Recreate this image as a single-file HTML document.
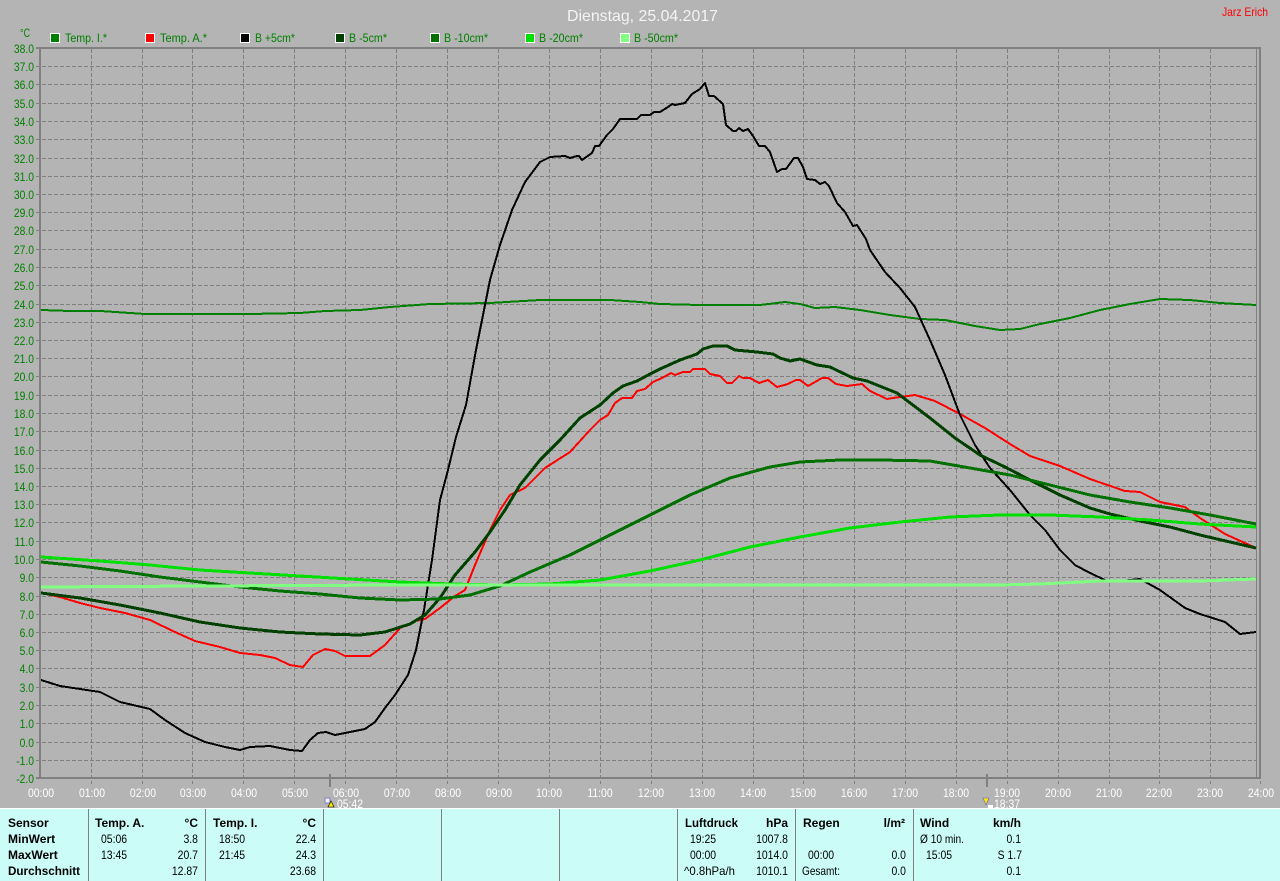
<!DOCTYPE html>
<html><head><meta charset="utf-8"><title>Dienstag, 25.04.2017</title>
<style>
html,body{margin:0;padding:0;background:#b4b4b4;width:1280px;height:881px;overflow:hidden}
svg{display:block}
text{font-family:"Liberation Sans",sans-serif;font-size:12px}
.y text{fill:#008000;text-anchor:end;transform-box:fill-box;transform-origin:100% 50%;transform:scaleX(.86)}
.x text{fill:#fff;text-anchor:middle;transform-box:fill-box;transform-origin:50% 50%;transform:scaleX(.87)}
.l text{fill:#008000}
.l rect{stroke:#fff;stroke-width:1}
.t text{fill:#000}
.t .b{font-weight:bold}
.t .r{text-anchor:end}
.t .s{transform-box:fill-box;transform-origin:0 50%;transform:scaleX(.87)}
.t .r.s{transform-origin:100% 50%}
polyline{fill:none;stroke-linejoin:round}
</style></head><body>
<svg width="1280" height="881" viewBox="0 0 1280 881" xmlns="http://www.w3.org/2000/svg">
<rect width="1280" height="881" fill="#b4b4b4"/>
<text x="567" y="21" fill="#f4f4f4" style="font-size:16px" textLength="151" lengthAdjust="spacingAndGlyphs">Dienstag, 25.04.2017</text>
<text x="1222" y="16" fill="#ff0000" textLength="46" lengthAdjust="spacingAndGlyphs">Jarz Erich</text>
<text x="20" y="37" fill="#008000" textLength="10" lengthAdjust="spacingAndGlyphs">°C</text>

<g class="l">
<rect x="50.500" y="33.500" width="9" height="9" fill="#008000"/><text x="65" y="42" textLength="42" lengthAdjust="spacingAndGlyphs">Temp. I.*</text>
<rect x="145.500" y="33.500" width="9" height="9" fill="#ff0000"/><text x="160" y="42" textLength="47" lengthAdjust="spacingAndGlyphs">Temp. A.*</text>
<rect x="240.500" y="33.500" width="9" height="9" fill="#000"/><text x="255" y="42" textLength="40" lengthAdjust="spacingAndGlyphs">B +5cm*</text>
<rect x="335.500" y="33.500" width="9" height="9" fill="#004000"/><text x="349" y="42" textLength="38" lengthAdjust="spacingAndGlyphs">B -5cm*</text>
<rect x="430.500" y="33.500" width="9" height="9" fill="#007000"/><text x="444" y="42" textLength="44" lengthAdjust="spacingAndGlyphs">B -10cm*</text>
<rect x="525.500" y="33.500" width="9" height="9" fill="#00e000"/><text x="539" y="42" textLength="44" lengthAdjust="spacingAndGlyphs">B -20cm*</text>
<rect x="620.500" y="33.500" width="9" height="9" fill="#80ff80"/><text x="634" y="42" textLength="44" lengthAdjust="spacingAndGlyphs">B -50cm*</text>
</g>

<g stroke="#808080" stroke-width="1" stroke-dasharray="4 2" shape-rendering="crispEdges" fill="none">
<path d="M36 66.500H1256M36 84.500H1256M36 103.500H1256M36 121.500H1256M36 139.500H1256M36 158.500H1256M36 176.500H1256M36 194.500H1256M36 212.500H1256M36 230.500H1256M36 249.500H1256M36 267.500H1256M36 285.500H1256M36 304.500H1256M36 322.500H1256M36 340.500H1256M36 358.500H1256M36 376.500H1256M36 395.500H1256M36 413.500H1256M36 431.500H1256M36 450.500H1256M36 468.500H1256M36 486.500H1256M36 504.500H1256M36 522.500H1256M36 541.500H1256M36 559.500H1256M36 577.500H1256M36 596.500H1256M36 614.500H1256M36 632.500H1256M36 650.500H1256M36 668.500H1256M36 687.500H1256M36 705.500H1256M36 723.500H1256M36 742.500H1256M36 760.500H1256"/>
<path d="M91.500 49V784M142.500 49V784M192.500 49V784M243.500 49V784M294.500 49V784M345.500 49V784M396.500 49V784M447.500 49V784M498.500 49V784M549.500 49V784M600.500 49V784M651.500 49V784M702.500 49V784M753.500 49V784M803.500 49V784M854.500 49V784M905.500 49V784M956.500 49V784M1007.500 49V784M1058.500 49V784M1109.500 49V784M1159.500 49V784M1210.500 49V784M1260.500 49V784"/>
</g>
<g stroke="#808080" shape-rendering="crispEdges" fill="none">
<path d="M36 48H1261M36 778H1261M40 47V779M1260 47V779" stroke-width="2"/>
<path d="M1256.500 48V778" stroke-width="1"/>
<path d="M330 774V787M987 774V787" stroke-width="2"/>
</g>

<g class="y">
<text x="34" y="53">38.0</text><text x="34" y="71">37.0</text><text x="34" y="89">36.0</text><text x="34" y="108">35.0</text><text x="34" y="126">34.0</text><text x="34" y="144">33.0</text><text x="34" y="163">32.0</text><text x="34" y="181">31.0</text><text x="34" y="199">30.0</text><text x="34" y="217">29.0</text><text x="34" y="235">28.0</text><text x="34" y="254">27.0</text><text x="34" y="272">26.0</text><text x="34" y="290">25.0</text><text x="34" y="309">24.0</text><text x="34" y="327">23.0</text><text x="34" y="345">22.0</text><text x="34" y="363">21.0</text><text x="34" y="381">20.0</text><text x="34" y="400">19.0</text><text x="34" y="418">18.0</text><text x="34" y="436">17.0</text><text x="34" y="455">16.0</text><text x="34" y="473">15.0</text><text x="34" y="491">14.0</text><text x="34" y="509">13.0</text><text x="34" y="527">12.0</text><text x="34" y="546">11.0</text><text x="34" y="564">10.0</text><text x="34" y="582">9.0</text><text x="34" y="601">8.0</text><text x="34" y="619">7.0</text><text x="34" y="637">6.0</text><text x="34" y="655">5.0</text><text x="34" y="673">4.0</text><text x="34" y="692">3.0</text><text x="34" y="710">2.0</text><text x="34" y="728">1.0</text><text x="34" y="747">0.0</text><text x="34" y="765">-1.0</text><text x="34" y="783">-2.0</text>
</g>

<g class="x">
<text x="41" y="797">00:00</text><text x="92" y="797">01:00</text><text x="143" y="797">02:00</text><text x="193" y="797">03:00</text><text x="244" y="797">04:00</text><text x="295" y="797">05:00</text><text x="346" y="797">06:00</text><text x="397" y="797">07:00</text><text x="448" y="797">08:00</text><text x="499" y="797">09:00</text><text x="549" y="797">10:00</text><text x="600" y="797">11:00</text><text x="651" y="797">12:00</text><text x="702" y="797">13:00</text><text x="753" y="797">14:00</text><text x="803" y="797">15:00</text><text x="854" y="797">16:00</text><text x="905" y="797">17:00</text><text x="956" y="797">18:00</text><text x="1007" y="797">19:00</text><text x="1058" y="797">20:00</text><text x="1109" y="797">21:00</text><text x="1159" y="797">22:00</text><text x="1210" y="797">23:00</text><text x="1261" y="797">24:00</text>
<text x="350" y="808">05:42</text><text x="1007" y="808">18:37</text>
</g>

<g shape-rendering="crispEdges">
<polyline stroke="#008000" stroke-width="2" points="41,310 70,311 100,311 145,314 200,314 250,314 300,313 325,311 360,310 390,307 430,304 490,303 540,300 610,300 640,302 660,304 700,305 760,305 785,302 800,304 815,308 835,307 860,310 890,315 920,319 945,320 975,326 1000,330 1020,329 1040,324 1070,318 1100,310 1130,304 1160,299 1190,300 1220,303 1256,305"/>
<polyline stroke="#ff0000" stroke-width="2" points="41,593 60,597 80,603 100,608 125,613 150,620 175,632 195,641 220,647 240,653 260,655 275,658 290,665 303,667 313,655 325,649 335,651 345,656 370,656 385,645 400,628 415,621 425,619 440,608 455,596 465,590 475,565 490,530 500,510 510,495 525,488 545,468 570,452 590,430 600,420 608,415 615,403 622,398 632,398 637,391 645,389 653,382 662,378 671,373 675,375 683,372 690,372 693,369 705,369 710,374 720,376 727,383 732,383 739,376 743,378 750,378 759,383 768,380 777,387 788,384 796,380 800,380 808,386 822,378 828,378 836,384 847,386 862,384 870,391 887,399 893,398 900,397 915,395 935,401 960,414 985,428 1010,444 1030,456 1060,466 1090,479 1125,491 1140,492 1160,502 1185,507 1200,518 1225,534 1256,548"/>
<polyline stroke="#000" stroke-width="2" points="41,680 60,686 80,689 100,692 120,702 150,709 165,720 185,733 205,742 225,747 240,750 250,747 270,746 290,750 302,751 310,740 318,733 326,732 335,735 350,732 365,729 375,722 385,708 395,695 408,675 416,650 424,610 432,560 440,500 448,470 456,437 466,405 476,350 490,280 500,245 512,210 525,182 540,162 550,157 565,156 570,158 577,156 579,156 582,160 592,153 595,146 599,146 607,135 613,129 620,119 637,119 641,115 650,115 654,112 660,112 668,107 672,104 675,105 685,103 692,94 700,89 705,83 709,96 714,96 723,104 726,125 733,131 736,131 739,128 743,131 748,129 753,136 759,146 765,146 770,152 777,172 782,169 786,169 794,158 798,158 803,167 807,179 815,180 820,184 825,182 829,186 837,203 845,212 853,226 857,225 866,239 870,250 885,272 900,288 915,307 930,340 945,375 960,415 975,445 990,468 1010,490 1030,515 1045,530 1060,550 1075,565 1090,573 1107,581 1120,581 1140,579 1160,590 1185,608 1200,614 1225,622 1240,634 1256,632"/>
<polyline stroke="#004000" stroke-width="3" points="41,593 80,598 120,605 160,613 200,622 240,628 280,632 320,634 360,635 385,632 410,624 425,615 440,598 455,575 475,552 490,532 505,510 520,485 540,460 560,440 580,418 600,405 613,393 623,386 637,381 650,374 660,369 680,360 697,354 703,349 713,346 727,346 735,350 757,352 773,354 780,358 790,361 800,359 817,365 830,367 853,378 867,381 897,393 930,418 955,438 980,455 1005,467 1030,480 1060,495 1090,508 1110,514 1140,521 1170,527 1200,535 1230,542 1256,548"/>
<polyline stroke="#007000" stroke-width="3" points="41,562 80,566 120,571 160,577 200,582 240,587 280,591 320,594 360,598 400,600 440,599 470,595 500,586 530,572 570,555 610,535 650,515 690,495 730,478 770,467 800,462 840,460 880,460 930,461 970,468 1010,475 1050,485 1090,495 1130,502 1170,508 1210,515 1256,524"/>
<polyline stroke="#00e000" stroke-width="3" points="41,557 100,561 150,565 200,570 250,573 300,576 350,579 400,582 450,584 500,585 550,584 600,580 650,571 700,560 750,547 800,537 850,528 900,522 950,517 1000,515 1050,515 1100,517 1150,520 1200,524 1256,527"/>
<polyline stroke="#80ff80" stroke-width="3" points="41,587 200,586 400,585 600,585 800,585 1000,585 1040,584 1100,581 1200,581 1256,579"/>
</g>

<g shape-rendering="crispEdges">
<rect x="325" y="798" width="5" height="5" fill="#f0f0ff" stroke="#8080c0" stroke-width="1"/>
<path d="M331 801l-3 6h6z" fill="#ffe800" stroke="#000" stroke-width=".6" shape-rendering="auto"/>
<path d="M986 798l-3 0 3 7 3-7z" fill="#ffe800" stroke="#6060c0" stroke-width=".6" shape-rendering="auto"/>
<rect x="988" y="805" width="5" height="3" fill="#fff"/>
</g>

<rect x="0" y="808" width="1280" height="73" fill="#ccfcf8"/>
<rect x="0" y="808" width="1280" height="1" fill="#fff"/>
<g fill="#808080" shape-rendering="crispEdges">
<rect x="88" y="809" width="1" height="72"/><rect x="205" y="809" width="1" height="72"/><rect x="323" y="809" width="1" height="72"/><rect x="441" y="809" width="1" height="72"/><rect x="559" y="809" width="1" height="72"/><rect x="677" y="809" width="1" height="72"/><rect x="795" y="809" width="1" height="72"/><rect x="913" y="809" width="1" height="72"/>
</g>
<g class="t">
<text class="b" x="8" y="827">Sensor</text>
<text class="b" x="8" y="843">MinWert</text>
<text class="b" x="8" y="859">MaxWert</text>
<text class="b" x="8" y="875" textLength="72" lengthAdjust="spacingAndGlyphs">Durchschnitt</text>

<text class="b" x="95" y="827">Temp. A.</text><text class="b r" x="198" y="827">°C</text>
<text class="s" x="101" y="843">05:06</text><text class="r s" x="198" y="843">3.8</text>
<text class="s" x="101" y="859">13:45</text><text class="r s" x="198" y="859">20.7</text>
<text class="r s" x="198" y="875">12.87</text>

<text class="b" x="213" y="827">Temp. I.</text><text class="b r" x="316" y="827">°C</text>
<text class="s" x="219" y="843">18:50</text><text class="r s" x="316" y="843">22.4</text>
<text class="s" x="219" y="859">21:45</text><text class="r s" x="316" y="859">24.3</text>
<text class="r s" x="316" y="875">23.68</text>

<text class="b" x="685" y="827" textLength="53" lengthAdjust="spacingAndGlyphs">Luftdruck</text><text class="b r" x="788" y="827">hPa</text>
<text class="s" x="690" y="843">19:25</text><text class="r s" x="788" y="843">1007.8</text>
<text class="s" x="690" y="859">00:00</text><text class="r s" x="788" y="859">1014.0</text>
<text x="684" y="875" textLength="51" lengthAdjust="spacingAndGlyphs">^0.8hPa/h</text><text class="r s" x="788" y="875">1010.1</text>

<text class="b" x="803" y="827">Regen</text><text class="b r" x="905" y="827">l/m²</text>
<text class="s" x="808" y="859">00:00</text><text class="r s" x="906" y="859">0.0</text>
<text x="802" y="875" textLength="38" lengthAdjust="spacingAndGlyphs">Gesamt:</text><text class="r s" x="906" y="875">0.0</text>

<text class="b" x="920" y="827">Wind</text><text class="b r" x="1021" y="827">km/h</text>
<text x="920" y="843" textLength="44" lengthAdjust="spacingAndGlyphs">Ø 10 min.</text><text class="r s" x="1021" y="843">0.1</text>
<text class="s" x="926" y="859">15:05</text><text class="r s" x="1022" y="859">S 1.7</text>
<text class="r s" x="1021" y="875">0.1</text>
</g>
</svg>
</body></html>
